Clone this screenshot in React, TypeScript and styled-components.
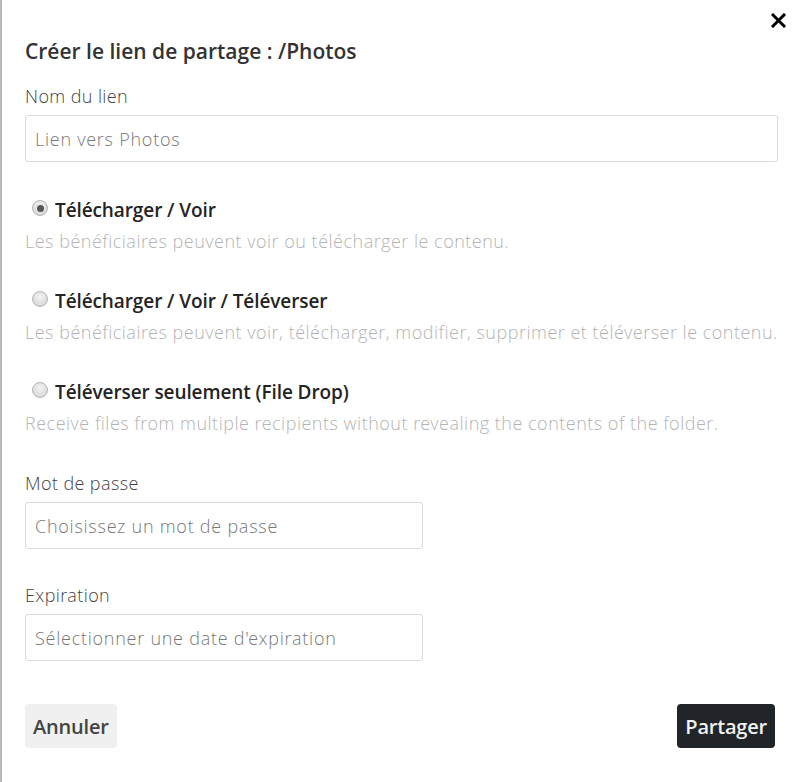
import React, { useState } from "react";
import styled, { createGlobalStyle } from "styled-components";

const GlobalStyle = createGlobalStyle`
    html, body {
        margin: 0;
        padding: 0;
        background: #ffffff;
    }
    body {
        font-family: "Open Sans", "Liberation Sans", sans-serif;
        color: #333;
    }
    * {
        box-sizing: border-box;
    }
`;

const light = `"Open Sans Light", "Open Sans", "Liberation Sans", sans-serif`;

const Modal = styled.div`
    position: relative;
    height: 782px;
    border-left: 2px solid #b9b9b9;
    padding: 38px 24px 0 23px;
    display: flex;
    flex-direction: column;
`;

const Close = styled.button`
    position: absolute;
    top: 12px;
    right: 16px;
    width: 16px;
    height: 16px;
    padding: 0;
    border: none;
    background: none;
    cursor: pointer;
    display: flex;
    align-items: center;
    justify-content: center;
`;

const Title = styled.h5`
    margin: 0;
    font-size: 21px;
    line-height: 26px;
    font-weight: 600;
    color: #333;
`;

const Form = styled.form`
    display: flex;
    flex-direction: column;
`;

const Field = styled.div<{ $top: number }>`
    display: flex;
    flex-direction: column;
    margin-top: ${(p) => p.$top}px;
`;

const Label = styled.label`
    font-family: ${light};
    font-size: 18px;
    line-height: 24px;
    font-weight: 300;
    letter-spacing: 0.4px;
    color: #444;
    margin-bottom: 7px;
`;

const Input = styled.input<{ $width?: number }>`
    width: ${(p) => (p.$width ? `${p.$width}px` : "100%")};
    height: 47px;
    border: 1px solid #dadada;
    border-radius: 3px;
    padding: 0 9px;
    font-family: ${light};
    font-size: 18px;
    font-weight: 300;
    letter-spacing: 0.75px;
    color: #333;
    outline: none;
    &::placeholder {
        color: #787878;
    }
`;

const Option = styled.div`
    display: flex;
    flex-direction: column;
    margin-top: 35px;
`;

const OptionRow = styled.label`
    display: flex;
    align-items: center;
    cursor: pointer;
    line-height: 26px;
`;

const Radio = styled.input.attrs({ type: "radio" })`
    appearance: none;
    width: 16px;
    height: 16px;
    margin: -4px 7px 0 7px;
    border-radius: 50%;
    border: 1px solid #b3b3b3;
    background: radial-gradient(circle at 50% 35%, #f2f2f2 0%, #dcdcdc 70%, #cfcfcf 100%);
    cursor: pointer;
    position: relative;
    flex-shrink: 0;
    &:checked::after {
        content: "";
        position: absolute;
        left: 3.5px;
        top: 3.5px;
        width: 7px;
        height: 7px;
        border-radius: 50%;
        background: #555;
    }
`;

const OptionTitle = styled.span`
    font-size: 19px;
    font-weight: 600;
    letter-spacing: -0.1px;
    color: #242424;
`;

const OptionDesc = styled.div`
    margin-top: 6px;
    font-family: ${light};
    font-size: 18px;
    line-height: 24px;
    font-weight: 300;
    letter-spacing: 0.5px;
    color: #b4b4b4;
    white-space: nowrap;
`;

const Footer = styled.div`
    margin-top: 43px;
    padding-right: 3px;
    display: flex;
    justify-content: space-between;
`;

const Button = styled.button<{ $dark?: boolean }>`
    height: 44px;
    padding: 0 8px;
    border: none;
    border-radius: 4px;
    font-family: "Open Sans", "Liberation Sans", sans-serif;
    font-size: 20px;
    font-weight: 600;
    letter-spacing: -0.2px;
    cursor: pointer;
    background: ${(p) => (p.$dark ? "#212529" : "#f0f0f0")};
    color: ${(p) => (p.$dark ? "#f2f2f2" : "#444")};
`;

const options = [
    {
        id: "view",
        title: "Télécharger / Voir",
        desc: "Les bénéficiaires peuvent voir ou télécharger le contenu.",
    },
    {
        id: "upload",
        title: "Télécharger / Voir / Téléverser",
        desc: "Les bénéficiaires peuvent voir, télécharger, modifier, supprimer et téléverser le contenu.",
    },
    {
        id: "drop",
        title: "Téléverser seulement (File Drop)",
        desc: "Receive files from multiple recipients without revealing the contents of the folder.",
    },
];

export default function App() {
    const [mode, setMode] = useState("view");

    return (
        <>
            <GlobalStyle />
            <Modal>
                <Close aria-label="Fermer">
                    <svg width="15" height="15" viewBox="0 0 15 15">
                        <path d="M2 2 L13 13 M13 2 L2 13" stroke="#000" strokeWidth="3" strokeLinecap="square" />
                    </svg>
                </Close>
                <Title>Créer le lien de partage : /Photos</Title>
                <Form onSubmit={(e) => e.preventDefault()}>
                    <Field $top={20}>
                        <Label>Nom du lien</Label>
                        <Input placeholder="Lien vers Photos" />
                    </Field>
                    {options.map((o) => (
                        <Option key={o.id}>
                            <OptionRow>
                                <Radio name="mode" checked={mode === o.id} onChange={() => setMode(o.id)} />
                                <OptionTitle>{o.title}</OptionTitle>
                            </OptionRow>
                            <OptionDesc>{o.desc}</OptionDesc>
                        </Option>
                    ))}
                    <Field $top={36}>
                        <Label>Mot de passe</Label>
                        <Input $width={398} type="password" placeholder="Choisissez un mot de passe" />
                    </Field>
                    <Field $top={34}>
                        <Label>Expiration</Label>
                        <Input $width={398} placeholder="Sélectionner une date d'expiration" />
                    </Field>
                    <Footer>
                        <Button type="button">Annuler</Button>
                        <Button $dark type="submit">Partager</Button>
                    </Footer>
                </Form>
            </Modal>
        </>
    );
}
